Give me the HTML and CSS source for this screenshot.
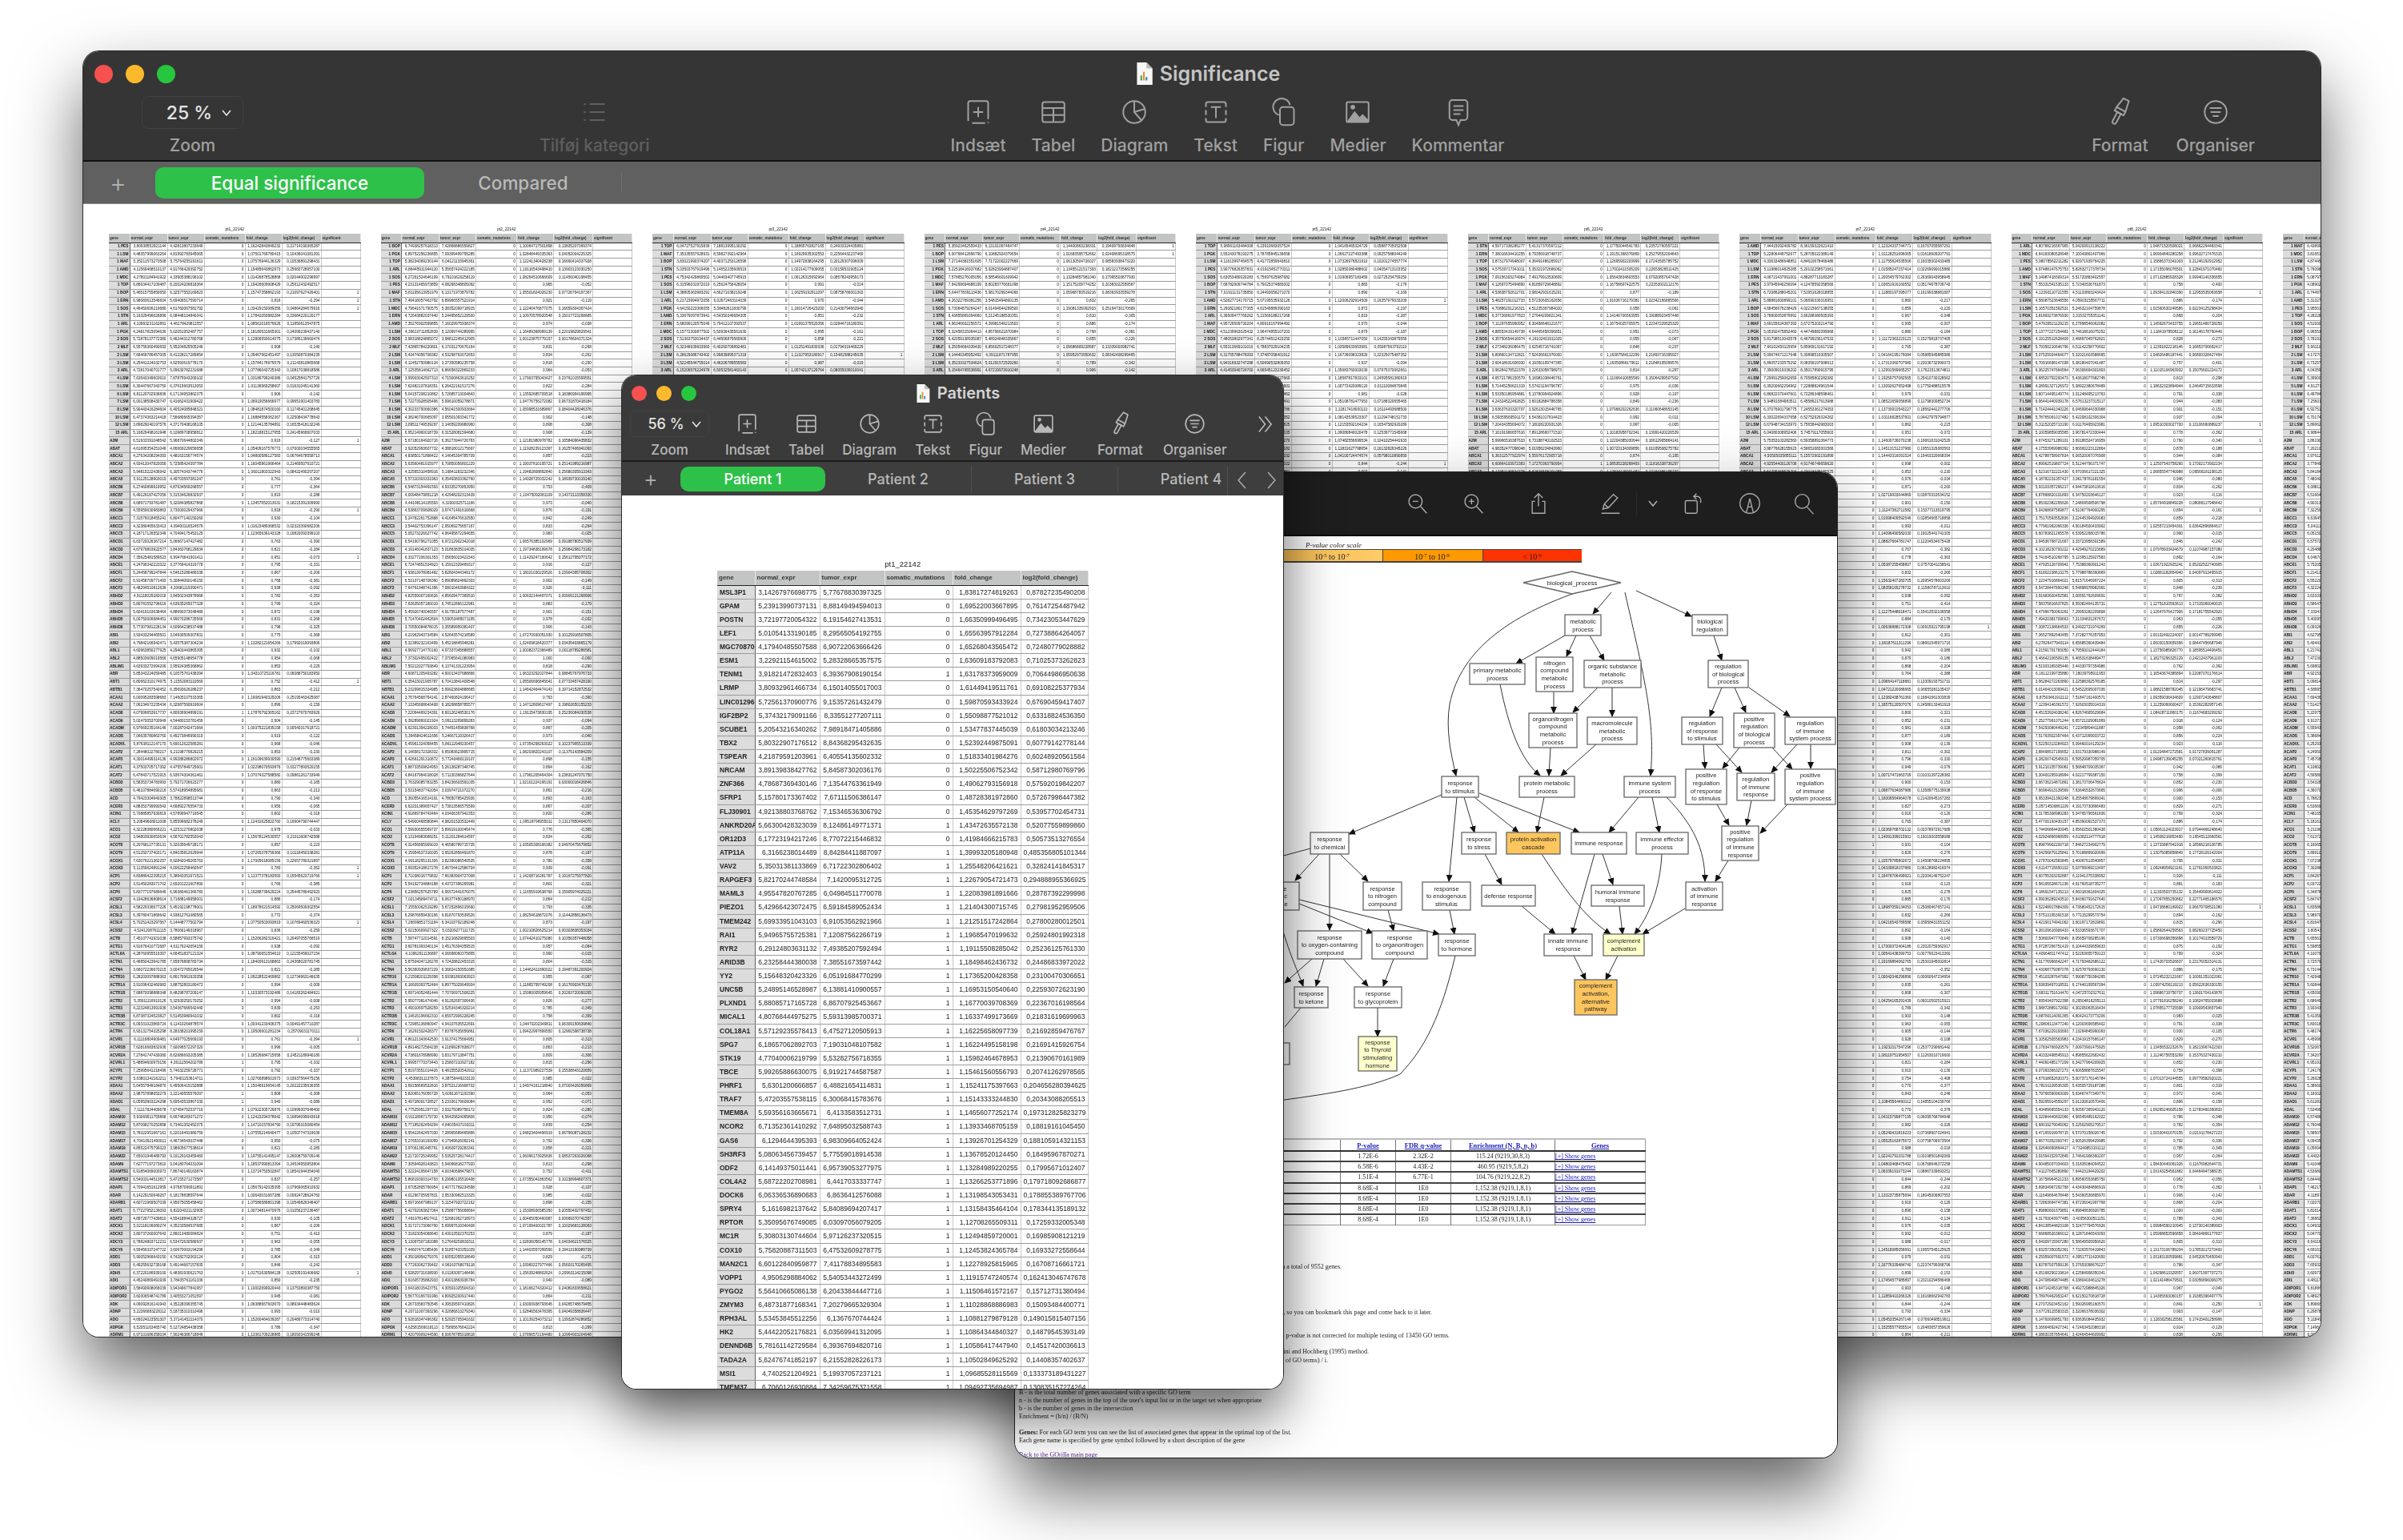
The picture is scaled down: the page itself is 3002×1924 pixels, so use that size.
FILE: index.html
```html
<!DOCTYPE html>
<html>

<head>
    <meta charset="utf-8" />
    <title>Significance</title>
    <link rel="stylesheet" href="styles.css">
</head>

<body>
    <svg class="defs" width="0" height="0">
        <symbol id="i-insert" viewBox="0 0 32 32"><path d="M6 25V7a2 2 0 0 1 2-2h16a2 2 0 0 1 2 2v16M10 27h13M26 26v1"/><path d="M16 11v10M11 16h10"/></symbol>
        <symbol id="i-table" viewBox="0 0 32 32"><rect x="5" y="6" width="22" height="20" rx="2"/><path d="M5 12h22M5 19h22M16 12v14"/></symbol>
        <symbol id="i-chart" viewBox="0 0 32 32"><circle cx="16" cy="16" r="11"/><path d="M16 5v11l7 8M16 16l10-3"/></symbol>
        <symbol id="i-text" viewBox="0 0 32 32"><path d="M6 11V8a2 2 0 0 1 2-2h16a2 2 0 0 1 2 2v3M6 14v5M26 14v5M6 22v2a2 2 0 0 0 2 2h16a2 2 0 0 0 2-2v-2"/><path d="M11 11h10M16 11v11"/></symbol>
        <symbol id="i-shape" viewBox="0 0 32 32"><path d="M11 19a8.500 8.500 0 1 1 11-10"/><rect x="12" y="11" width="14" height="18" rx="3"/></symbol>
        <symbol id="i-media" viewBox="0 0 32 32"><rect x="5" y="6" width="22" height="20" rx="1.500"/><path class="solid" d="M5 26l8-11 5 6 3-3 6 6v2zM13.500 11a2.300 2.300 0 1 1-4.600 0 2.300 2.300 0 0 1 4.600 0z"/></symbol>
        <symbol id="i-comment" viewBox="0 0 32 32"><path d="M10 4h12a3 3 0 0 1 3 3v14a3 3 0 0 1-3 3h-4l-2 5-2-5h-4a3 3 0 0 1-3-3V7a3 3 0 0 1 3-3z"/><path d="M11 10h10M11 14h10M11 18h7"/></symbol>
        <symbol id="i-brush" viewBox="0 0 32 32"><g transform="rotate(28 16 16)"><path d="M13 2h6l2 11H11zM11 13h10v4H11z"/><path d="M14 17h4v10a2 2 0 0 1-4 0z"/></g></symbol>
        <symbol id="i-arrange" viewBox="0 0 32 32"><circle cx="16" cy="16" r="11"/><path d="M10 12h12M11 16h10M13 20h6"/></symbol>
        <symbol id="i-list" viewBox="0 0 32 32"><path d="M11 8h15M11 16h15M11 24h15M5 8h2M5 16h2M5 24h2"/></symbol>
        <symbol id="i-zoomout" viewBox="0 0 32 32"><circle cx="13" cy="13" r="9.500"/><path d="M20 20l9 10M9 13h8"/></symbol>
        <symbol id="i-zoomin" viewBox="0 0 32 32"><circle cx="13" cy="13" r="9.500"/><path d="M20 20l9 10M9 13h8M13 9v8"/></symbol>
        <symbol id="i-share" viewBox="0 0 32 32"><path d="M16 2v18M10 8l6-6 6 6M11 13H7v17h18V13h-4"/></symbol>
        <symbol id="i-pen" viewBox="0 0 32 32"><path d="M5 24l2-7L20 3l6 5-13 14zM7 17l6 5M3 30h26"/></symbol>
        <symbol id="i-rotate" viewBox="0 0 32 32"><rect x="5" y="12" width="17" height="18" rx="2"/><path d="M17 6h5a5 5 0 0 1 5 5v4M21 2l-4 4 4 4"/></symbol>
        <symbol id="i-markup" viewBox="0 0 32 32"><circle cx="16" cy="16" r="14"/><path d="M11 29l5-20 5 20M13 21h6"/></symbol>
        <symbol id="i-search" viewBox="0 0 32 32"><circle cx="13" cy="13" r="10"/><path d="M20 21l9 10"/></symbol>
        <symbol id="i-doc" viewBox="0 0 20 26"><path class="page" d="M2 0h11l7 7v19H2z"/><path class="fold" d="M13 0l7 7h-7z"/><path class="bar1" d="M6 15h2v6H6z"/><path class="bar2" d="M9 11h2v10H9z"/><path class="bar3" d="M12 17h2v4h-2z"/></symbol>
    </svg>

    <!-- big numbers window -->
    <div class="win win-main">
        <div class="titlebar">
            <div class="lights"><i class="red"></i><i class="yellow"></i><i class="green"></i></div>
            <div class="doc-title"><svg class="doc-icon"><use href="#i-doc"/></svg><span>Significance</span></div>
        </div>
        <div class="toolbar">
            <div class="tool zoom-tool">
                <div class="zoom-box"><span>25 %</span><svg class="chev" viewBox="0 0 12 8"><path d="M1 1l5 6 5-6"/></svg></div>
                <span class="tool-label">Zoom</span>
            </div>
            <div class="tool tool-dim">
                <svg class="icon"><use href="#i-list"/></svg>
                <span class="tool-label">Tilføj kategori</span>
            </div>
            <div class="tool-group">
                <div class="tool"><svg class="icon"><use href="#i-insert"/></svg><span class="tool-label">Indsæt</span></div>
                <div class="tool"><svg class="icon"><use href="#i-table"/></svg><span class="tool-label">Tabel</span></div>
                <div class="tool"><svg class="icon"><use href="#i-chart"/></svg><span class="tool-label">Diagram</span></div>
                <div class="tool"><svg class="icon"><use href="#i-text"/></svg><span class="tool-label">Tekst</span></div>
                <div class="tool"><svg class="icon"><use href="#i-shape"/></svg><span class="tool-label">Figur</span></div>
                <div class="tool"><svg class="icon"><use href="#i-media"/></svg><span class="tool-label">Medier</span></div>
                <div class="tool"><svg class="icon"><use href="#i-comment"/></svg><span class="tool-label">Kommentar</span></div>
            </div>
            <div class="tool-group tool-group-end">
                <div class="tool"><svg class="icon"><use href="#i-brush"/></svg><span class="tool-label">Format</span></div>
                <div class="tool"><svg class="icon"><use href="#i-arrange"/></svg><span class="tool-label">Organiser</span></div>
            </div>
        </div>
        <div class="tabbar">
            <span class="tab-add">+</span>
            <div class="tab tab-on">Equal significance</div>
            <div class="tab">Compared</div>
        </div>
        <div class="canvas" id="mainSheets"></div>
    </div>

    <!-- pdf window, sits between the two numbers windows -->
    <div class="win win-preview">
        <div class="preview-tools">
            <svg class="picon"><use href="#i-zoomout"/></svg>
            <svg class="picon"><use href="#i-zoomin"/></svg>
            <svg class="picon"><use href="#i-share"/></svg>
            <svg class="picon"><use href="#i-pen"/></svg>
            <i class="picon-sep"></i>
            <svg class="chev" viewBox="0 0 12 8"><path d="M1 1l5 6 5-6"/></svg>
            <svg class="picon"><use href="#i-rotate"/></svg>
            <svg class="picon"><use href="#i-markup"/></svg>
            <svg class="picon"><use href="#i-search"/></svg>
        </div>
        <div class="pdf">
            <svg class="graph" id="graph" viewBox="1268 670 1027 1151" width="1027" height="1151">
                <defs>
                    <marker id="arrow" markerUnits="userSpaceOnUse" markerWidth="9" markerHeight="8" refX="8" refY="4" orient="auto"><path d="M0 0l9 4-9 4z" fill="#111"/></marker>
                    <linearGradient id="scaleFade"><stop offset="0" stop-color="#e8a93c"/><stop offset="1" stop-color="#ffcb66"/></linearGradient>
                </defs>
                <text class="scale-title" x="1631" y="684">P-value color scale</text>
                <rect x="1400" y="686" width="576" height="17" fill="#444"/>
                <rect x="1400" y="687" width="327" height="14" fill="url(#scaleFade)"/>
                <rect x="1728" y="687" width="124" height="14" fill="#ff9900"/>
                <rect x="1853" y="687" width="123" height="14" fill="#ff3300"/>
                <text class="scale-label" x="1664" y="699">10<tspan dy="-3" class="sup">-5</tspan><tspan dy="3"> to 10</tspan><tspan dy="-3" class="sup">-7</tspan></text>
                <text class="scale-label" x="1789" y="699">10<tspan dy="-3" class="sup">-7</tspan><tspan dy="3"> to 10</tspan><tspan dy="-3" class="sup">-9</tspan></text>
                <text class="scale-label" x="1914" y="699">&lt; 10<tspan dy="-3" class="sup">-9</tspan></text>

                <text class="note" x="1676" y="1585">Searching for enriched GO terms that appear densely at the top of a ranked list of genes, running on a total of 9552 genes.</text>
                <text class="note" x="1789" y="1642">The results of this search are stored on our server for some time, so you can bookmark this page and come back to it later.</text>
                <text class="note" x="1811" y="1671">P-value is the enrichment p-value computed according to the mHG or HG model. This p-value is not corrected for multiple testing of 13450 GO terms.</text>
                <text class="note" x="1710" y="1691">FDR q-value is the correction of the above p-value for multiple testing using the Benjamini and Hochberg (1995) method.</text>
                <text class="note" x="1659" y="1702">Namely, for the ith term (ranked according to p-value) the FDR q-value is (p-value * number of GO terms) / i.</text>
                <text class="note note-left" x="1273" y="1742">B - is the total number of genes associated with a specific GO term</text>
                <text class="note note-left" x="1273" y="1752">n - is the number of genes in the top of the user's input list or in the target set when appropriate</text>
                <text class="note note-left" x="1273" y="1762">b - is the number of genes in the intersection</text>
                <text class="note note-left" x="1273" y="1772">Enrichment = (b/n) / (B/N)</text>
                <text class="note note-left" x="1273" y="1792"><tspan class="note-b">Genes:</tspan> For each GO term you can see the list of associated genes that appear in the optimal top of the list.</text>
                <text class="note note-left" x="1273" y="1802">Each gene name is specified by gene symbol followed by a short description of the gene</text>
                <text class="note note-left note-link" x="1273" y="1820">Back to the GOrilla main page</text>
            </svg>
            <table class="results">
                <thead>
                    <tr><th class="r-desc"></th><th>P-value</th><th>FDR q-value</th><th>Enrichment (N, B, n, b)</th><th>Genes</th></tr>
                </thead>
                <tbody>
                    <tr><td></td><td>1.72E-6</td><td>2.32E-2</td><td>115.24 (9219,30,8,3)</td><td class="r-genes">[+] Show genes</td></tr>
                    <tr><td></td><td>6.58E-6</td><td>4.43E-2</td><td>460.95 (9219,5,8,2)</td><td class="r-genes">[+] Show genes</td></tr>
                    <tr><td></td><td>1.51E-4</td><td>6.77E-1</td><td>104.76 (9219,22,8,2)</td><td class="r-genes">[+] Show genes</td></tr>
                    <tr><td></td><td>8.68E-4</td><td>1E0</td><td>1,152.38 (9219,1,8,1)</td><td class="r-genes">[+] Show genes</td></tr>
                    <tr><td></td><td>8.68E-4</td><td>1E0</td><td>1,152.38 (9219,1,8,1)</td><td class="r-genes">[+] Show genes</td></tr>
                    <tr><td></td><td>8.68E-4</td><td>1E0</td><td>1,152.38 (9219,1,8,1)</td><td class="r-genes">[+] Show genes</td></tr>
                    <tr><td></td><td>8.68E-4</td><td>1E0</td><td>1,152.38 (9219,1,8,1)</td><td class="r-genes">[+] Show genes</td></tr>
                </tbody>
            </table>
        </div>
    </div>

    <!-- patients window -->
    <div class="win win-patients">
        <div class="titlebar">
            <div class="lights"><i class="red"></i><i class="yellow"></i><i class="green"></i></div>
            <div class="doc-title"><svg class="doc-icon"><use href="#i-doc"/></svg><span>Patients</span></div>
        </div>
        <div class="toolbar">
            <div class="tool zoom-tool">
                <div class="zoom-box"><span>56 %</span><svg class="chev" viewBox="0 0 12 8"><path d="M1 1l5 6 5-6"/></svg></div>
                <span class="tool-label">Zoom</span>
            </div>
            <div class="tool-group">
                <div class="tool"><svg class="icon"><use href="#i-insert"/></svg><span class="tool-label">Indsæt</span></div>
                <div class="tool"><svg class="icon"><use href="#i-table"/></svg><span class="tool-label">Tabel</span></div>
                <div class="tool"><svg class="icon"><use href="#i-chart"/></svg><span class="tool-label">Diagram</span></div>
                <div class="tool"><svg class="icon"><use href="#i-text"/></svg><span class="tool-label">Tekst</span></div>
                <div class="tool"><svg class="icon"><use href="#i-shape"/></svg><span class="tool-label">Figur</span></div>
                <div class="tool"><svg class="icon"><use href="#i-media"/></svg><span class="tool-label">Medier</span></div>
            </div>
            <div class="tool-group tool-group-2">
                <div class="tool"><svg class="icon"><use href="#i-brush"/></svg><span class="tool-label">Format</span></div>
                <div class="tool"><svg class="icon"><use href="#i-arrange"/></svg><span class="tool-label">Organiser</span></div>
            </div>
            <svg class="more" viewBox="0 0 20 22"><path d="M2 1l8 10-8 10M10 1l8 10-8 10"/></svg>
        </div>
        <div class="tabbar">
            <span class="tab-add">+</span>
            <div class="tabs-clip">
                <div class="tab tab-on">Patient 1</div>
                <div class="tab">Patient 2</div>
                <div class="tab">Patient 3</div>
                <div class="tab">Patient 4</div>
            </div>
            <div class="tab-arrows">
                <svg viewBox="0 0 10 20"><path d="M9 1L1 10l8 9"/></svg>
                <svg viewBox="0 0 10 20"><path d="M1 1l8 9-8 9"/></svg>
            </div>
        </div>
        <div class="canvas" id="patientSheet"></div>
    </div>

    <script src="page.js"></script>
</body>

</html>
```

FILE: styles.css
```css
* {
    margin: 0;
    padding: 0;
    box-sizing: border-box;
}

html,
body {
    width: 3002px;
    height: 1924px;
    overflow: hidden;
    background: #fff;
}

body {
    position: relative;
    font-family: Inter, "Liberation Sans", sans-serif;
}

.defs {
    position: absolute;
}

symbol path,
symbol rect,
symbol circle {
    fill: none;
    stroke: currentColor;
    stroke-width: 1.6;
}

symbol .solid {
    fill: currentColor;
    stroke: none;
}

symbol .page {
    fill: #f7f7f7;
    stroke: none;
}

symbol .fold {
    fill: #bbb;
    stroke: none;
}

symbol .bar1 {
    fill: #3fae49;
    stroke: none;
}

symbol .bar2 {
    fill: #e8912c;
    stroke: none;
}

symbol .bar3 {
    fill: #3a7bd5;
    stroke: none;
}

/* windows */
.win {
    position: absolute;
    display: flex;
    flex-direction: column;
    overflow: hidden;
    background: #fff;
}

.win-main {
    left: 104px;
    top: 64px;
    width: 2795px;
    height: 1606px;
    border-radius: 20px;
    box-shadow: 0 0 0 1px #2b2b2b, 0 42px 85px rgba(0, 0, 0, .62);
    color: #a0a0a0;
}

.win-preview {
    left: 1268px;
    top: 590px;
    width: 1027px;
    height: 1231px;
    border-radius: 20px;
    box-shadow: 0 0 0 1px #222, 0 42px 85px rgba(0, 0, 0, .62);
}

.win-patients {
    left: 777px;
    top: 469px;
    width: 826px;
    height: 1266px;
    border-radius: 18px;
    box-shadow: 0 0 0 1px #2b2b2b, 0 32px 70px rgba(0, 0, 0, .6);
    color: #b8b8b8;
}

.titlebar {
    display: grid;
    grid-template-columns: 1fr auto 1fr;
    align-items: center;
    background: #353535;
}

.win-main .titlebar {
    height: 56px;
    padding-left: 14px;
}

.win-patients .titlebar {
    height: 44px;
    padding-left: 12px;
    background: #3a3a3a;
}

.lights {
    display: flex;
}

.lights i {
    display: block;
    border-radius: 50%;
}

.win-main .lights {
    gap: 16px;
}

.win-main .lights i {
    width: 23px;
    height: 23px;
}

.win-patients .lights {
    gap: 12px;
}

.win-patients .lights i {
    width: 19px;
    height: 19px;
}

.red {
    background: #f6504f;
}

.yellow {
    background: #fdb92c;
}

.green {
    background: #27c63f;
}

.doc-title {
    display: flex;
    align-items: center;
    font-weight: 600;
    color: #c4c4c4;
}

.win-main .doc-title {
    gap: 9px;
    font-size: 25px;
}

.win-patients .doc-title {
    gap: 9px;
    font-size: 20px;
    color: #d6d6d6;
}

.win-main .doc-icon {
    width: 22px;
    height: 28px;
}

.win-patients .doc-icon {
    width: 19px;
    height: 23px;
}

/* toolbar */
.toolbar {
    display: flex;
    align-items: flex-start;
    background: #353535;
}

.win-main .toolbar {
    height: 82px;
    border-bottom: 2px solid #111;
    padding-left: 73px;
}

.win-patients .toolbar {
    height: 64px;
    border-bottom: 2px solid #1c1c1c;
    padding-left: 10px;
    background: #3a3a3a;
}

.tool {
    display: flex;
    flex-direction: column;
    align-items: center;
    flex: none;
}

.win-main .tool {
    gap: 11px;
}

.win-patients .tool {
    gap: 6px;
}

.tool-label {
    white-space: nowrap;
    font-weight: 500;
}

.win-main .tool-label {
    font-size: 21px;
    line-height: 22px;
}

.win-patients .tool-label {
    font-size: 17px;
    line-height: 20px;
}

.icon {
    display: block;
}

.win-main .icon {
    width: 40px;
    height: 40px;
}

.win-patients .icon {
    width: 33px;
    height: 33px;
}

.tool-group {
    display: flex;
    flex: none;
}

.win-main .tool-group {
    gap: 32px;
    margin-left: 376px;
}

.win-main .tool-group-end {
    margin-left: auto;
    margin-right: 82px;
    gap: 35px;
}

.win-main .tool-dim {
    color: #5f5f5f;
    margin-left: 370px;
}

.win-patients .tool-group {
    gap: 23px;
    margin-left: 20px;
}

.win-patients .tool-group-2 {
    margin-left: 39px;
    gap: 25px;
}

.zoom-tool {
    color: inherit;
}

.zoom-box {
    display: flex;
    align-items: center;
    justify-content: center;
    border: 1px solid #414141;
    color: #e4e4e4;
    font-weight: 500;
}

.win-main .zoom-box {
    width: 127px;
    height: 41px;
    gap: 12px;
    padding-left: 16px;
    border-radius: 8px;
    font-size: 23px;
}

.win-main .zoom-box+.tool-label {
    margin-top: -1px;
}

.win-patients .zoom-box {
    width: 99px;
    height: 33px;
    gap: 9px;
    padding-left: 12px;
    border-radius: 6px;
    font-size: 18px;
}

.chev {
    width: 12px;
    height: 8px;
    fill: none;
    stroke: currentColor;
    stroke-width: 1.6;
    flex: none;
}

.more {
    width: 19px;
    height: 24px;
    margin: 5px 0 0 38px;
    fill: none;
    stroke: #c4c4c4;
    stroke-width: 1.5;
    flex: none;
}

/* tabs */
.tabbar {
    display: flex;
    align-items: flex-start;
}

.win-main .tabbar {
    height: 53px;
    padding: 7px 0 0 33px;
    background: #606060;
    border-bottom: 1px solid #8d8d8d;
}

.win-patients .tabbar {
    height: 42px;
    padding: 6px 0 0 26px;
    background: #3e3e3e;
}

.tab-add {
    width: 20px;
    text-align: center;
    font-weight: 300;
    color: #b0b0b0;
}

.win-main .tab-add {
    font-size: 32px;
    line-height: 39px;
    margin-right: 37px;
}

.win-patients .tab-add {
    font-size: 28px;
    line-height: 31px;
    margin-right: 27px;
}

.tab {
    flex: none;
    text-align: center;
    font-weight: 500;
    color: #b9b9b9;
}

.win-main .tab {
    width: 247px;
    height: 39px;
    font-size: 22.500px;
    line-height: 39px;
    position: relative;
}

.win-main .tab-on {
    width: 336px;
}

.win-main .tab:last-child::after {
    content: "";
    position: absolute;
    right: 0;
    top: 6px;
    height: 24px;
    border-right: 1px solid #6f6f6f;
}

.tab-on {
    color: #fff;
    background: #2ec14a;
    border-radius: 10px;
}

.tabs-clip {
    display: flex;
    width: 683px;
    overflow: hidden;
}

.win-patients .tab {
    width: 183px;
    height: 31px;
    font-size: 18px;
    line-height: 31px;
    border-right: 1px solid #505050;
}

.win-patients .tab-on {
    width: 181px;
    border: 0;
    color: #fff;
}

.tab-arrows {
    display: flex;
    gap: 26px;
    height: 36px;
    padding: 5px 0 0 12px;
    border-left: 1px solid #505050;
}

.tab-arrows svg {
    width: 11px;
    height: 24px;
    fill: none;
    stroke: #b0b0b0;
    stroke-width: 1.3;
}

/* sheets */
.canvas {
    flex: 1;
    min-height: 0;
    overflow: hidden;
    display: flex;
    background: #fff;
}

.win-main .canvas {
    gap: 25px;
    padding: 29px 0 0 32px;
    color: #111;
}

.win-patients .canvas {
    padding: 78px 0 0 119px;
    color: #222;
}

.sheet {
    flex: none;
    filter: blur(.35px);
}

.sheet-title {
    text-align: center;
}

.sheet-table {
    border-collapse: collapse;
    table-layout: fixed;
    font-family: "Liberation Sans", Arial, sans-serif;
}

.sheet-table th,
.sheet-table td {
    overflow: hidden;
    white-space: nowrap;
    border-right: 1px solid #c9c9c9;
    border-bottom: 1px solid #9c9c9c;
    text-align: right;
}

.sheet-table th {
    text-align: left;
    background: #c3c5c5;
    border-right-color: #e6e6e6;
    border-bottom: 1px solid #222;
    color: #333;
}

.sheet-table td.g {
    background: #dcdcdc;
    border-right: 1px solid #666;
    font-weight: 700;
}

.sheet-table td.g-left {
    text-align: left;
}

.small .sheet-title {
    font-family: "Liberation Sans", sans-serif;
    font-size: 5px;
    line-height: 5px;
    margin-bottom: 3px;
}

.small .sheet-table {
    width: 314px;
    font-size: 4.800px;
}

.small th {
    height: 11px;
    padding: 0 1px;
    font-size: 4.600px;
}

.small td {
    height: 9.730px;
    padding: 0 1px;
    line-height: 8px;
}

.big {
    font-size: 8.500px;
}

.big .sheet-title {
    font-family: "Liberation Sans", sans-serif;
    font-size: 9.500px;
    line-height: 16px;
}

.big .sheet-table {
    width: 463px;
}

.big th {
    height: 18px;
    padding: 0 2px;
    font-size: 8px;
}

.big td {
    height: 17.140px;
    padding: 0 3px;
    line-height: 12px;
}

/* preview window */
.preview-tools {
    flex: none;
    height: 80px;
    display: grid;
    grid-template-columns: 94px 46px 116px 64px 1px 40px 60px 82px 54px;
    justify-content: end;
    justify-items: center;
    align-items: center;
    padding-right: 14px;
    background: #1e1e1e;
    color: #aaa;
    border-bottom: 2px solid #0c0c0c;
}

.picon {
    width: 28px;
    height: 30px;
}

.picon-sep {
    display: block;
    width: 1px;
    height: 30px;
    background: #2c2c2c;
}

.pdf {
    position: relative;
    flex: 1;
    min-height: 0;
    overflow: hidden;
    background: #fff;
}

.graph {
    display: block;
    filter: blur(.3px);
}

.node {
    fill: #fff;
    stroke: #666;
    stroke-width: 1.300;
}

.node-orange {
    fill: #fdc55e;
}

.node-pale {
    fill: #ffffcc;
}

.node-text {
    font-family: "Liberation Sans", sans-serif;
    font-size: 7.600px;
    text-anchor: middle;
    fill: #222;
}

.edge {
    fill: none;
    stroke: #333;
    stroke-width: 1;
}

.scale-title {
    font-family: "Liberation Serif", serif;
    font-style: italic;
    font-size: 9px;
    fill: #222;
}

.scale-label {
    font-family: "Liberation Serif", serif;
    font-size: 10px;
    text-anchor: middle;
    fill: #222;
}

.sup {
    font-size: 6.500px;
}

.note {
    font-family: "Liberation Serif", serif;
    font-size: 8px;
    text-anchor: end;
    fill: #222;
}

.note-left {
    text-anchor: start;
}

.note-b {
    font-weight: 700;
}

.note-link {
    fill: #5b1f8f;
    text-decoration: underline;
}

.results {
    position: absolute;
    left: 132px;
    top: 752px;
    width: 656px;
    table-layout: fixed;
    border-collapse: collapse;
    font-family: "Liberation Serif", serif;
    font-size: 8px;
    text-align: center;
    color: #222;
    border: 1px solid #999;
    border-top: 2px solid #bbb;
    filter: blur(.25px);
}

.results th {
    height: 15px;
    font-size: 8.500px;
    color: #1a1ab8;
    text-decoration: underline;
    border-left: 1px solid #777;
    border-bottom: 2px solid #333;
}

.results th:nth-child(2) {
    width: 69px;
}

.results th:nth-child(3) {
    width: 69px;
}

.results th:nth-child(4) {
    width: 130px;
}

.results th:nth-child(5) {
    width: 113px;
}

.results td {
    height: 13.200px;
    border-left: 1px solid #777;
    border-bottom: 2px solid #444;
}

.results tr:last-child td {
    border-bottom: 0;
}

.results td.r-genes {
    text-align: left;
    color: #1a1ab8;
    text-decoration: underline;
}
```

FILE: page.js
```js
// seeded random so the picture stays the same on every load
var seed = 22142;

function rnd() {
    seed = (seed * 16807) % 2147483647;
    return seed / 2147483647;
}

function num(v, d) {
    return v.toFixed(d).replace('.', ',');
}

/**
 * big sheets in the first window
 */
var firstGenes = ['1 BOP', '1 PES', '1 ERN', '1 LSM', '1 MDC', '1 MAF', '1 SOS', '1 TOP', '1 PGK', '1 AMD', '1 ARL', '1 STN',
    '2 SOS', '2 MLF', '2 LSM', '3 LSM', '3 ARL', '4 LSM', '5 LSM', '6 LSM', '7 LSM', '8 LSM', '10 LSM', '12 LSM', '15 ARL'];
var names = 'A2M ABAT ABCA1 ABCA2 ABCA3 ABCA5 ABCB6 ABCB7 ABCB8 ABCB9 ABCC1 ABCC3 ABCC5 ABCD1 ABCD3 ABCD4 ABCE1 ABCF1 ABCF2 ABCF3 ABHD2 ABHD3 ABHD4 ABHD5 ABHD8 ABI1 ABI2 ABL1 ABL2 ABLIM1 ABR ABT1 ABTB1 ACAA1 ACAA2 ACAD8 ACAD9 ACADM ACADS ACADVL ACAP2 ACAP3 ACAT1 ACAT2 ACBD3 ACBD5 ACD ACER3 ACIN1 ACLY ACO1 ACO2 ACOT8 ACOT9 ACOX1 ACOX3 ACP1 ACP2 ACP6 ACSF2 ACSL1 ACSL3 ACSL4 ACSS2 ACTB ACTG1 ACTL6A ACTN1 ACTN4 ACTR10 ACTR1A ACTR1B ACTR2 ACTR3 ACTR3B ACTR3C ACTR6 ACVR1 ACVR1B ACVR2A ACVRL1 ACYP1 ACYP2 ADAA1 ADAA2 ADAD1 ADAL ADAM10 ADAM12 ADAM15 ADAM17 ADAM19 ADAM22 ADAM9 ADAMTS1 ADAMTS2 ADAP1 ADAR ADARB1 ADAT1 ADAT2 ADCK1 ADCK2 ADCY3 ADCY6 ADD1 ADD3 ADH5 ADI1 ADIPOR1 ADIPOR2 ADK ADNP ADO ADPGK ADRM1 ADSL ADSS'.split(' ');

function bigSheet(n) {
    var html = '<div class="sheet small"><div class="sheet-title">pt' + n + '_22142</div>';
    html += '<table class="sheet-table"><colgroup><col width="26"><col width="47"><col width="46"><col width="51"><col width="46"><col width="49"><col width="49"></colgroup>';
    html += '<tr><th>gene</th><th>normal_expr</th><th>tumor_expr</th><th>somatic_mutations</th><th>fold_change</th><th>log2(fold_change)</th><th>significant</th></tr>';
    var heads = firstGenes.slice(0, 12).sort(function() { return rnd() - .5; }).concat(firstGenes.slice(12));
    var all = heads.concat(names).slice(0, 141);
    for (var i = 0; i < all.length; i++) {
        var a = 3.5 + rnd() * 4.2;
        var fold = .75 + rnd() * .45;
        if (i < 5) { fold = 1.01 + rnd() * .2; }
        var mut = rnd() < .04 ? 1 : 0;
        var sig = rnd() < .03 ? 1 : '';
        var foldText = fold > 1 ? num(fold, 14) : num(fold, 3);
        var logV = Math.log(fold) / Math.LN2;
        var logText = fold > 1 ? num(logV, 14) : num(logV, 3);
        html += '<tr><td class="g' + (i < heads.length ? '' : ' g-left') + '">' + all[i] + '</td><td>' + num(a, 14) + '</td><td>' + num(a * fold, 14) +
            '</td><td>' + mut + '</td><td>' + foldText + '</td><td>' + logText + '</td><td>' + sig + '</td></tr>';
    }
    return html + '</table></div>';
}

var main = '';
for (var s = 1; s <= 9; s++) { main += bigSheet(s); }
document.getElementById('mainSheets').innerHTML = main;

/**
 * patient 1 sheet
 */
var patient = `MSL3P1|3,14267976698775|5,77678830397325|0|1,83817274819263|0,87827235490208
GPAM|5,23913990737131|8,88149494594013|0|1,69522003667895|0,76147254487942
POSTN|3,72197720054322|6,19154627413531|0|1,66350999496495|0,73423053447629
LEF1|5,01054133190185|8,29565054192755|0|1,65563957912284|0,72738864264057
MGC70870|4,17940485507588|6,90722063666426|0|1,65268043565472|0,72480779028882
ESM1|3,22921154615002|5,28328665357575|0|1,63609183792083|0,71025373262823
TENM1|3,91821472832403|6,39367908190154|1|1,63178373959009|0,70644986950638
LRMP|3,80932961466734|6,15014055017003|0|1,61449419511761|0,69108225377934
LINC01296|5,72561370900776|9,15357261432479|0|1,59870593433924|0,67690459417407
IGF2BP2|5,37432179091166|8,33551277207111|0|1,55098877521012|0,63318824536350
SCUBE1|5,20543216340262|7,98918471405886|0|1,53477837445039|0,61803034213246
TBX2|5,80322907176512|8,84368295432635|0|1,52392449875091|0,60779142778144
TSPEAR|4,21879591203961|6,40554135602332|0|1,51833401984276|0,60248920561584
NRCAM|3,89139838427762|5,84587302036176|0|1,50225506752342|0,58712980769796
ZNF366|4,78687369430146|7,13544763361949|0|1,49062793156918|0,57592019842207
SFRP1|5,15780173367402|7,67111506386147|0|1,48728381972860|0,57267998447382
FLJ30901|4,92138803768762|7,15346536306792|0|1,45354629797269|0,53957702454731
ANKRD20A|5,66300428323039|8,12486149771371|1|1,43472635572138|0,52077559899860
OR12D3|6,17723194217246|8,77072215446832|0|1,41984666215783|0,50573513276554
ATP11A|6,3166238014489|8,84284411887097|1|1,39993205180948|0,485356805101344
VAV2|5,35031381133869|6,71722302806402|1|1,25548206421621|0,32824141845317
RAPGEF3|5,82170244748584|7,1420095312725|1|1,22679054721473|0,294888955366925
MAML3|4,95547820767285|6,04984511770078|1|1,22083981891666|0,28787392299998
PIEZO1|5,42966423072475|6,59184589052434|1|1,21404300715745|0,27981952959506
TMEM242|5,69933951043103|6,91053562921966|1|1,21251517242864|0,27800280012501
RAI1|5,94965755725381|7,12087562266719|1|1,19685470199632|0,25924801992318
RYR2|6,29124803631132|7,49385207592494|1|1,19115508285042|0,25236125761330
ARID3B|6,23258444380038|7,38551673597442|1|1,18498462436732|0,24486833972022
YY2|5,15648320423326|6,05191684770299|1|1,17365200428358|0,23100470306651
UNC5B|5,24895146528987|6,13881410900557|1|1,16953150540640|0,22593072623190
PLXND1|5,88085717165728|6,86707925453667|1|1,16770039708369|0,22367016198564
MICAL1|4,80768444975275|5,59313985700371|1|1,16337499173669|0,21831619699963
COL18A1|5,57129235578413|6,47527120505913|1|1,16225658097739|0,21692859476767
SPG7|6,18657062892703|7,19031048107582|1|1,16224495158198|0,21691415926754
STK19|4,77040006219799|5,53282756718355|1|1,15982464678953|0,21390670161989
TBCE|5,99265886630075|6,91921744587587|1|1,15461560556793|0,20741262978565
PHRF1|5,6301200666857|6,48821654114831|1|1,15241175397663|0,204656280394625
TRAF7|5,47203557538115|6,30068415783676|1|1,15143333244830|0,20343088205513
TMEM8A|5,59356163665671|6,4133583512731|1|1,14656077252174|0,197312825823279
NCOR2|6,71352361410292|7,64895032588743|1|1,13933468705159|0,18819161045450
GAS6|6,1294644395393|6,98309664052424|1|1,13926701254329|0,188105914321153
SH3RF3|5,08063456739457|5,77559018914538|1|1,13678520124450|0,18495967870271
ODF2|6,14149375011441|6,95739053277975|1|1,13284989220255|0,17995671012407
COL4A2|5,68722202708981|6,4417033337747|1|1,13266253771896|0,179718092686877
DOCK6|6,06336536890683|6,8636412576088|1|1,13198543053431|0,178855389767706
SPRY4|5,1616982137642|5,84089694207417|1|1,13158435464104|0,178344135189132
RPTOR|5,35095676749085|6,03097056079205|1|1,12708265509311|0,17259332005348
MC1R|5,30803130744604|5,97126237320515|1|1,12494859720001|0,16985908121219
COX10|5,75820887311503|6,47532609278775|1|1,12453824365784|0,16933272558644
MAN2C1|6,60122840959877|7,41178834895583|1|1,12278925815965|0,16708716661721
VOPP1|4,9506298884062|5,54053443272499|1|1,11915747240574|0,162413046747678
PYGO2|5,56410665086138|6,20433844447716|1|1,11506461572167|0,15712731380494
ZMYM3|6,48731877168341|7,20279665329304|1|1,11028868886983|0,15093484400771
RPH3AL|5,53453845512256|6,1367670744424|1|1,10881279879128|0,149015815407156
HK2|5,44422052176821|6,03569941312095|1|1,10864344840327|0,14879545393149
DENND6B|5,78161142729584|6,39367694820716|1|1,10586417447940|0,14517420036613
TADA2A|5,62476741852197|6,21552828226173|1|1,10502849625292|0,14408357402637
MSI1|4,7402521204921|5,19937057237121|1|1,09685528115569|0,133373189431227
TMEM37|6,7060126930884|7,34259675371558|1|1,09492735694987|0,130835157274264`.split('\n');

var big = '<div class="sheet big"><div class="sheet-title">pt1_22142</div>';
big += '<table class="sheet-table"><colgroup><col width="47"><col width="81"><col width="81"><col width="85"><col width="85"><col width="84"></colgroup>';
big += '<tr><th>gene</th><th>normal_expr</th><th>tumor_expr</th><th>somatic_mutations</th><th>fold_change</th><th>log2(fold_change)</th></tr>';
patient.forEach(function(line) {
    var c = line.split('|');
    big += '<tr><td class="g g-left">' + c[0] + '</td>';
    for (var i = 1; i < c.length; i++) { big += '<td>' + c[i] + '</td>'; }
    big += '</tr>';
});
document.getElementById('patientSheet').innerHTML = big + '</table></div>';

/**
 * go graph in the pdf, page coordinates: x0 y0 x1 y1 look label
 */
var nodes = [
    [1955, 768, 2000, 794, '', 'metabolic|process'],
    [2114, 768, 2158, 794, '', 'biological|regulation'],
    [1836, 829, 1905, 855, '', 'primary metabolic|process'],
    [1919, 821, 1965, 864, '', 'nitrogen|compound|metabolic|process'],
    [1979, 825, 2050, 859, '', 'organic substance|metabolic|process'],
    [2134, 825, 2184, 859, '', 'regulation|of biological|process'],
    [1910, 891, 1970, 934, '', 'organonitrogen|compound|metabolic|process'],
    [1983, 896, 2045, 930, '', 'macromolecule|metabolic|process'],
    [2101, 896, 2152, 930, '', 'regulation|of response|to stimulus'],
    [2166, 891, 2217, 934, '', 'positive|regulation|of biological|process'],
    [2230, 896, 2293, 930, '', 'regulation|of immune|system process'],
    [1801, 970, 1847, 996, '', 'response|to stimulus'],
    [1898, 970, 1967, 996, '', 'protein metabolic|process'],
    [2029, 970, 2093, 996, '', 'immune system|process'],
    [2106, 961, 2157, 1005, '', 'positive|regulation|of response|to stimulus'],
    [2170, 966, 2217, 1000, '', 'regulation|of immune|response'],
    [2230, 961, 2293, 1005, '', 'positive|regulation|of immune|system process'],
    [1637, 1040, 1685, 1067, '', 'response|to chemical'],
    [1826, 1040, 1869, 1067, '', 'response|to stress'],
    [1882, 1040, 1949, 1067, 'node-orange', 'protein activation|cascade'],
    [1963, 1040, 2032, 1067, '', 'immune response'],
    [2044, 1040, 2109, 1067, '', 'immune effector|process'],
    [2151, 1032, 2197, 1075, '', 'positive|regulation|of immune|response'],
    [1560, 1102, 1623, 1137, '', 'response|to organic|substance'],
    [1703, 1102, 1751, 1137, '', 'response|to nitrogen|compound'],
    [1777, 1102, 1837, 1137, '', 'response|to endogenous|stimulus'],
    [1851, 1106, 1918, 1132, '', 'defense response'],
    [1988, 1106, 2054, 1132, '', 'humoral immune|response'],
    [2106, 1102, 2152, 1137, '', 'activation|of immune|response'],
    [1621, 1163, 1701, 1198, '', 'response|to oxygen-containing|compound'],
    [1714, 1163, 1783, 1198, '', 'response|to organonitrogen|compound'],
    [1797, 1167, 1843, 1194, '', 'response|to hormone'],
    [1929, 1167, 1989, 1194, '', 'innate immune|response'],
    [2003, 1167, 2054, 1194, 'node-pale', 'complement|activation'],
    [1617, 1233, 1659, 1259, '', 'response|to ketone'],
    [1692, 1233, 1751, 1259, '', 'response|to glycoprotein'],
    [1967, 1224, 2020, 1268, 'node-orange', 'complement|activation,|alternative|pathway'],
    [1697, 1295, 1745, 1338, 'node-pale', 'response|to Thyroid|stimulating|hormone'],
    [1560, 1303, 1611, 1330, '', 'response|to hormone']
];

// no arrow head on the ones that run under the patients window
var plainEdges = [
    'M1637 1060L1600 1070', 'M1625 1259L1605 1283'
];

var edges = [
    'M2013 740L1990 767', 'M2044 738L2113 770', 'M2030 740C2055 850 2068 900 2062 969',
    'M1988 734C1890 765 1825 810 1811 880C1806 910 1812 940 1819 969',
    'M1955 794L1894 829', 'M1969 794L1957 820', 'M1986 794L2004 825', 'M2141 794L2151 825',
    'M2151 859L2136 895', 'M2167 859L2181 890', 'M2185 859L2236 895',
    'M1874 855C1885 910 1900 950 1924 969', 'M1941 864L1941 891', 'M1996 859L1965 890', 'M2014 859L2014 895',
    'M1937 934L1935 969', 'M1994 930L1950 969', 'M2128 930L2130 960', 'M2144 930L2176 965',
    'M2173 934L2152 960', 'M2214 934L2239 961', 'M2245 930L2213 965', 'M2262 930L2262 960',
    'M2145 1005L2160 1031', 'M2188 1000L2182 1031', 'M2233 1005L2199 1041',
    'M1801 993L1685 1042', 'M1829 996L1842 1040', 'M1842 996L1897 1040', 'M1848 991L1973 1040', 'M1820 996L1810 1101',
    'M1929 996L1920 1040', 'M2047 996L2010 1040', 'M2064 996L2073 1040', 'M2082 996C2115 1030 2130 1060 2130 1101',
    'M2159 1075L2143 1101', 'M1648 1067L1618 1100', 'M1661 1067L1661 1162', 'M1674 1067L1709 1101',
    'M1855 1067L1876 1105', 'M1926 1067C1960 1120 1985 1150 2012 1167', 'M1992 1067L1964 1167', 'M2002 1067L2015 1105',
    'M2076 1067C2074 1110 2060 1145 2042 1167', 'M2105 1135L2052 1167', 'M2023 1132L2027 1167', 'M1901 1132L1943 1167',
    'M1623 1124L1798 1167', 'M1623 1129L1715 1166', 'M1734 1137L1741 1163', 'M1811 1137L1817 1167',
    'M1654 1198L1644 1232', 'M1639 1198L1605 1228', 'M1678 1198L1709 1232', 'M1741 1198L1728 1232',
    'M1600 1153C1610 1190 1620 1210 1628 1232', 'M1721 1259L1721 1295',
    'M1966 1194L1981 1224', 'M2021 1194L2006 1224'
];

var g = '';
plainEdges.forEach(function(d) { g += '<path class="edge" d="' + d + '"/>'; });
g += '<path class="edge" d="M1818 1194C1800 1270 1780 1310 1749 1342C1710 1360 1650 1368 1590 1376"/>';
edges.forEach(function(d) { g += '<path class="edge" marker-end="url(#arrow)" d="' + d + '"/>'; });

g += '<path class="node" d="M1964 714l61 14-61 14-61-14z"/><text class="node-text" x="1964" y="731">biological_process</text>';
nodes.forEach(function(n) {
    g += '<rect class="node ' + n[4] + '" x="' + n[0] + '" y="' + n[1] + '" width="' + (n[2] - n[0]) + '" height="' + (n[3] - n[1]) + '"/>';
    var lines = n[5].split('|');
    lines.forEach(function(t, i) {
        var y = (n[1] + n[3]) / 2 + (i - (lines.length - 1) / 2) * 9.6 + 2.7;
        g += '<text class="node-text" x="' + (n[0] + n[2]) / 2 + '" y="' + y + '">' + t + '</text>';
    });
});
document.getElementById('graph').insertAdjacentHTML('beforeend', g);
```
